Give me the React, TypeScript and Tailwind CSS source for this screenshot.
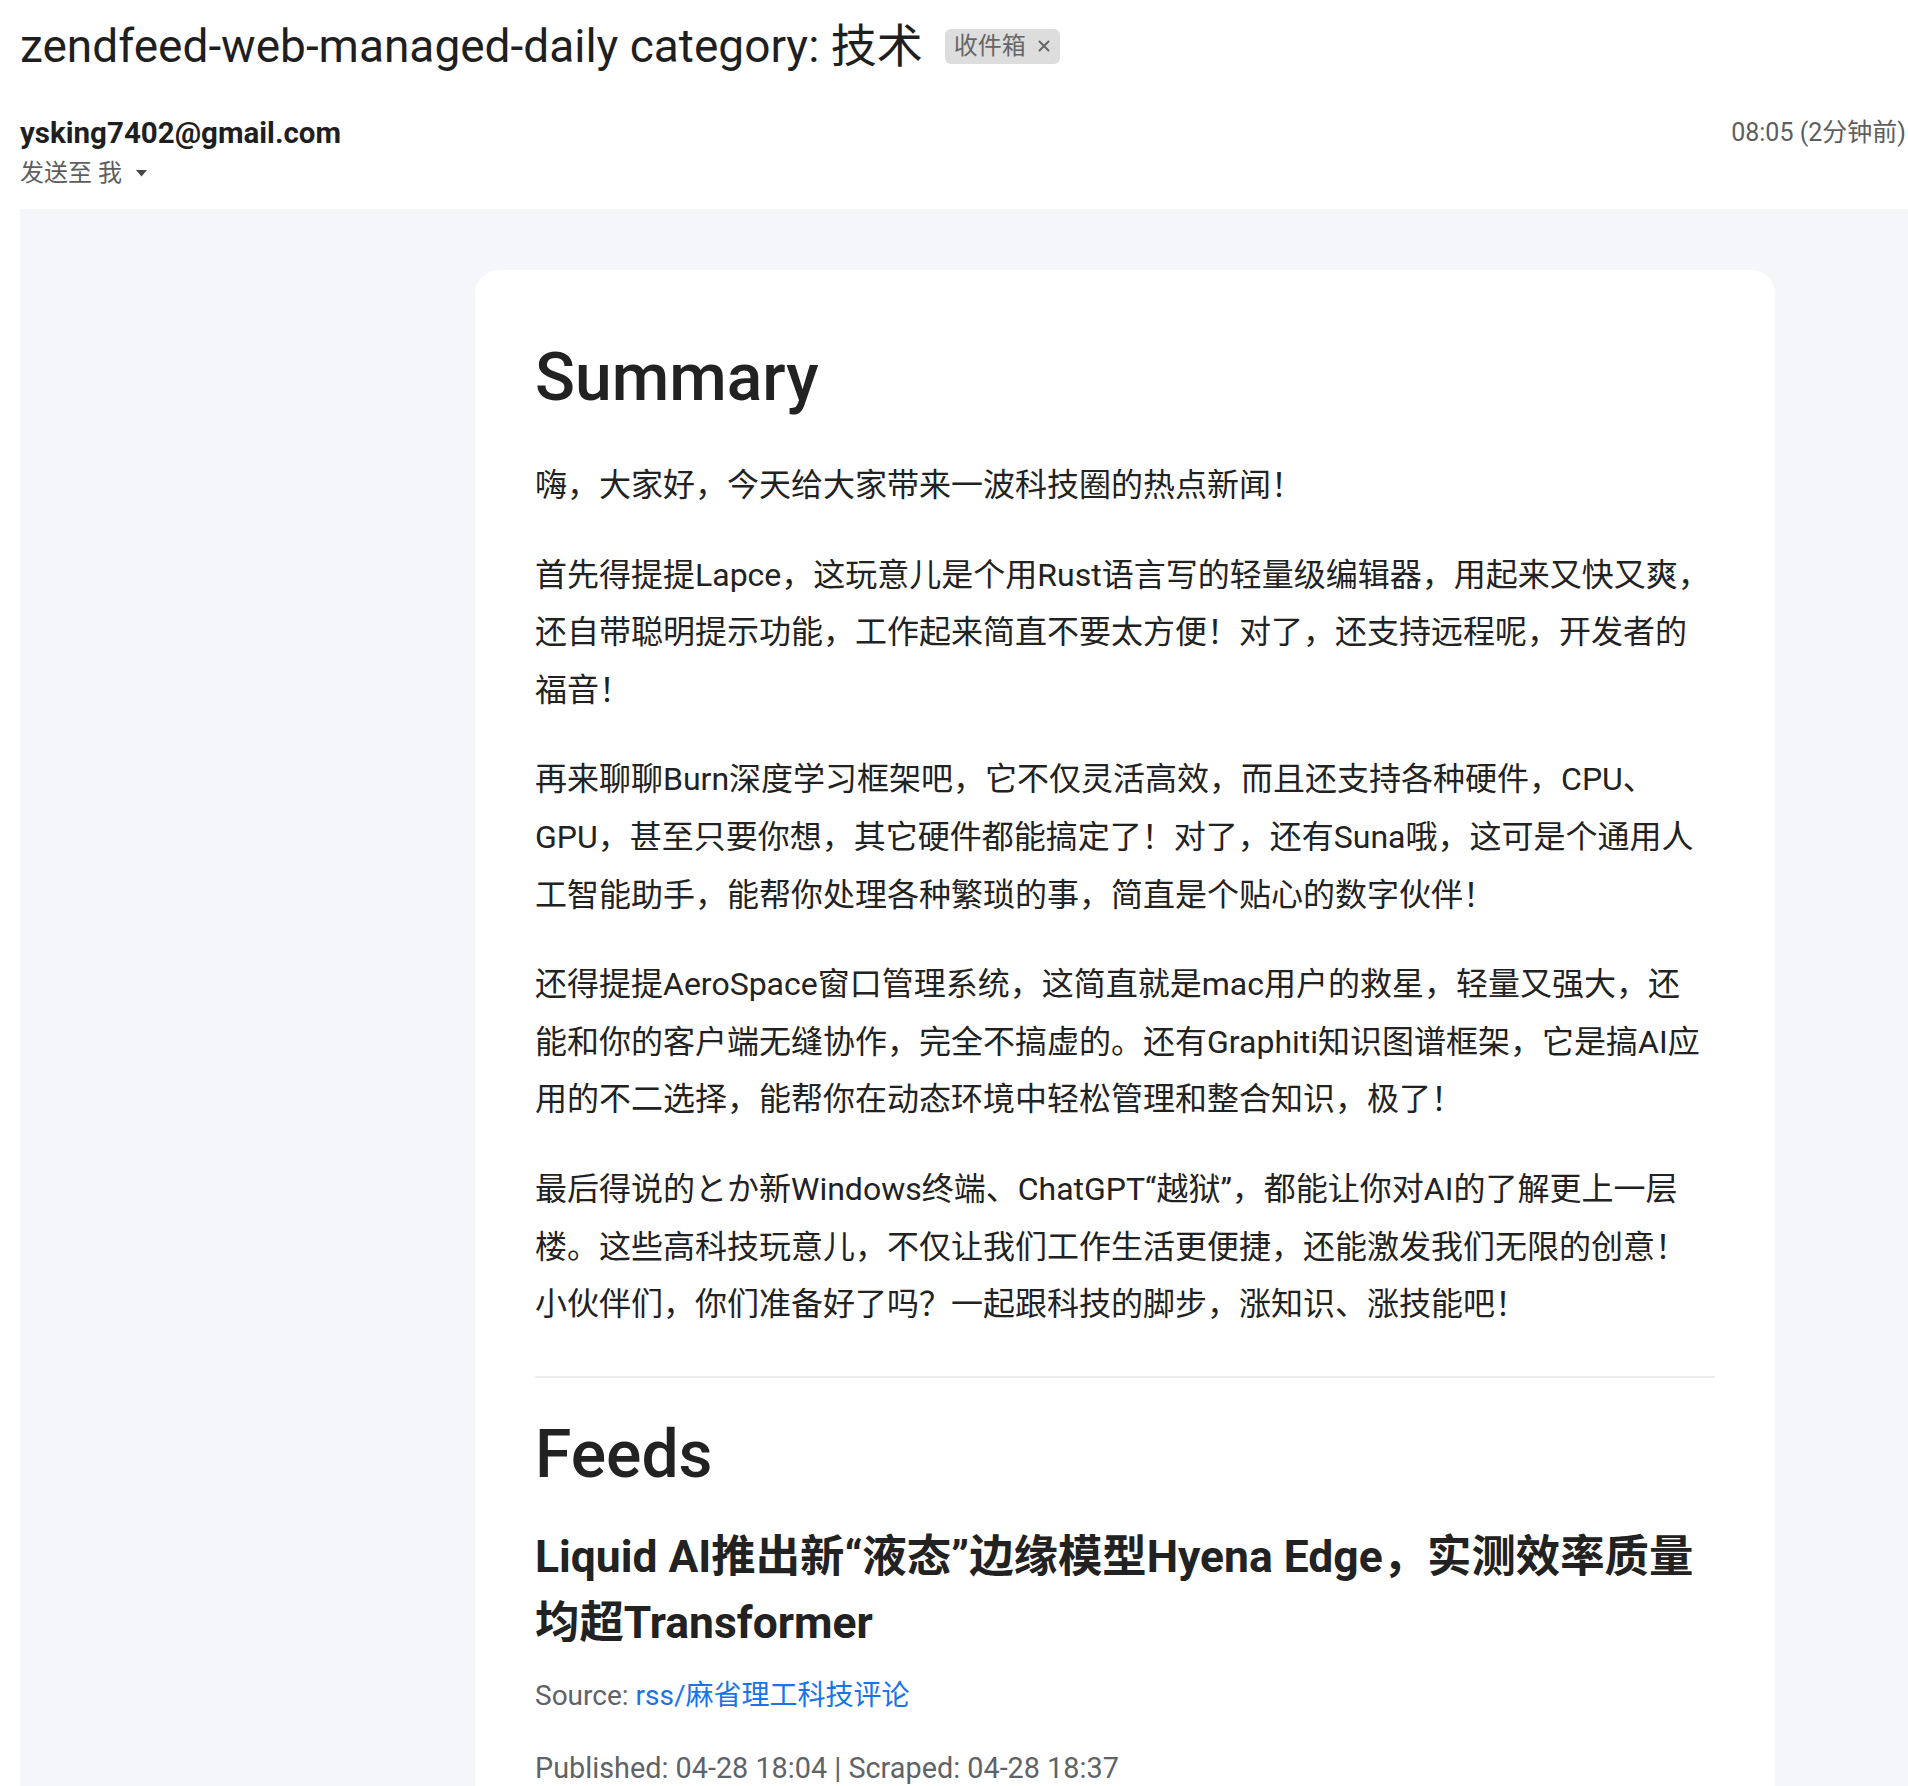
import React from "react";

const paras: string[][] = [
  ["嗨，大家好，今天给大家带来一波科技圈的热点新闻！"],
  [
    "首先得提提Lapce，这玩意儿是个用Rust语言写的轻量级编辑器，用起来又快又爽，",
    "还自带聪明提示功能，工作起来简直不要太方便！对了，还支持远程呢，开发者的",
    "福音！",
  ],
  [
    "再来聊聊Burn深度学习框架吧，它不仅灵活高效，而且还支持各种硬件，CPU、",
    "GPU，甚至只要你想，其它硬件都能搞定了！对了，还有Suna哦，这可是个通用人",
    "工智能助手，能帮你处理各种繁琐的事，简直是个贴心的数字伙伴！",
  ],
  [
    "还得提提AeroSpace窗口管理系统，这简直就是mac用户的救星，轻量又强大，还",
    "能和你的客户端无缝协作，完全不搞虚的。还有Graphiti知识图谱框架，它是搞AI应",
    "用的不二选择，能帮你在动态环境中轻松管理和整合知识，极了！",
  ],
  [
    "最后得说的とか新Windows终端、ChatGPT“越狱”，都能让你对AI的了解更上一层",
    "楼。这些高科技玩意儿，不仅让我们工作生活更便捷，还能激发我们无限的创意！",
    "小伙伴们，你们准备好了吗？一起跟科技的脚步，涨知识、涨技能吧！",
  ],
];

export default function App() {
  return (
    <div className="w-[1908px] min-h-[1786px] overflow-hidden bg-white font-['Roboto','Noto_Sans_CJK_SC',sans-serif] text-[#1f1f1f]">
      {/* header */}
      <div className="pl-[20px] pt-[18px] w-[1906px]">
        <div className="flex items-center">
          <h1 className="text-[46px] leading-[56px] font-normal whitespace-nowrap text-[#1f1f1f]">
            zendfeed-web-managed-daily category: 技术
          </h1>
          <span className="ml-[22px] flex h-[35px] items-center gap-[12px] rounded-[6px] bg-[#dddddd] pl-[9px] pr-[10px] text-[24px] leading-none text-[#666666]">
            <span>收件箱</span>
            <svg width="12" height="12" viewBox="0 0 12 12" aria-hidden="true">
              <path d="M1.5 1.5 L10.5 10.5 M10.5 1.5 L1.5 10.5" stroke="#666666" strokeWidth="2" strokeLinecap="round" />
            </svg>
          </span>
        </div>
        <div className="mt-[39px] flex items-start justify-between">
          <div>
            <div className="text-[29.5px] leading-[40px] font-bold text-[#1f1f1f]">ysking7402@gmail.com</div>
            <div className="mt-[4px] flex items-center text-[24px] leading-[32px] text-[#5e5e5e]">
              <span>发送至 我</span>
              <svg className="ml-[14px]" width="11" height="7" viewBox="0 0 11 7" aria-hidden="true">
                <path d="M0 0 L11 0 L5.5 6.5 Z" fill="#474747" />
              </svg>
            </div>
          </div>
          <div className="text-[25px] leading-[40px] text-[#5e5e5e] whitespace-nowrap">08:05 (2分钟前)</div>
        </div>
      </div>

      {/* email body */}
      <div className="ml-[20px] mt-[20px] w-[2210px] min-h-[1600px] bg-[#f5f6fa] pt-[61px] pb-[40px]">
        <div className="mx-auto w-[1300px] rounded-[24px] bg-white px-[60px] pt-[68px] pb-[80px] text-[#222222]">
          <h2 className="text-[66px] leading-[80px] font-medium text-[#222222]">Summary</h2>
          <div className="mt-[39px]">
            {paras.map((lines, i) => (
              <p key={i} className={i === 0 ? "text-[32px] leading-[57.6px] whitespace-nowrap" : "mt-[32px] text-[32px] leading-[57.6px] whitespace-nowrap"}>
                {lines.map((l, j) => (
                  <span key={j} className="block">
                    {l}
                  </span>
                ))}
              </p>
            ))}
          </div>
          <div className="mt-[42px] h-[2px] bg-[#eeeeee]" />
          <h2 className="mt-[37px] text-[66px] leading-[80px] font-medium text-[#222222]">Feeds</h2>
          <h3 className="mt-[29px] text-[44.4px] leading-[66px] font-bold whitespace-nowrap text-[#222222]">
            <span className="block">Liquid AI推出新“液态”边缘模型Hyena Edge，实测效率质量</span>
            <span className="block">均超Transformer</span>
          </h3>
          <p className="mt-[20px] text-[28px] leading-[40px] text-[#5f6368]">
            Source: <a className="text-[#1a73e8]">rss/麻省理工科技评论</a>
          </p>
          <p className="mt-[32px] text-[28.8px] leading-[40px] text-[#5f6368]">
            Published: 04-28 18:04 | Scraped: 04-28 18:37
          </p>
        </div>
      </div>
    </div>
  );
}
